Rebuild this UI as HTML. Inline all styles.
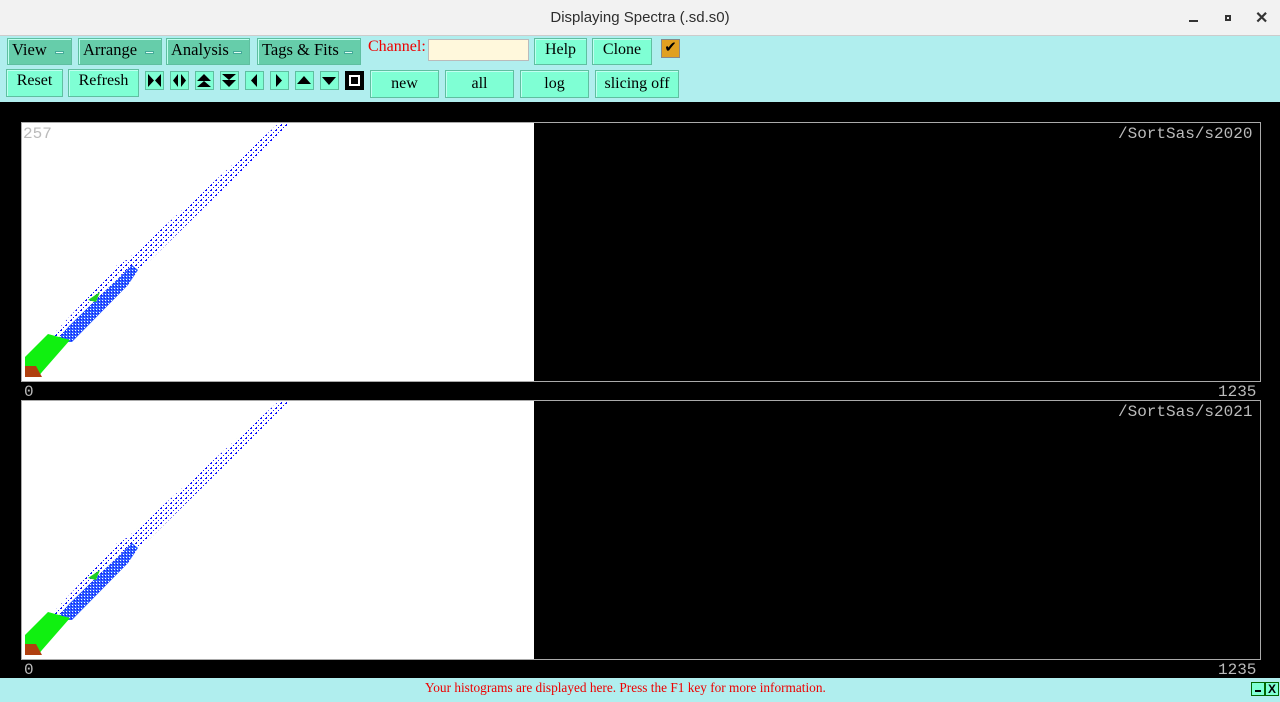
<!DOCTYPE html><html><head><style>
*{margin:0;padding:0;box-sizing:border-box}
body{width:1280px;height:702px;overflow:hidden;background:#000;position:relative;font-family:"Liberation Serif",serif}
.a{position:absolute}
.tb{left:0;top:0;width:1280px;height:36px;background:#f2f2f2;border-bottom:1px solid #ccc;text-align:center;font:15px/36px "Liberation Sans",sans-serif;color:#2e2e2e}
.bar{left:0;top:36px;width:1280px;height:66px;background:#b0eeee}
.b{position:absolute;background:#7fffd4;border:1px solid #5fbfa0;font-size:16px;text-align:center;color:#000;box-shadow:inset 1px 1px 0 #c0fff0}
.m{background:#66cdaa;text-align:left;padding-left:4px;font-size:16.5px}
.m i{position:absolute;right:7px;top:12px;width:9px;height:3px;background:#e0fff4;border:1px solid #4a9}
.lab{font:16px "Liberation Mono",monospace;color:#bbb}
</style></head><body>
<div class="a tb">Displaying Spectra (.sd.s0)</div>
<div class="a" style="left:1189px;top:20px;width:9px;height:2px;background:#333"></div>
<div class="a" style="left:1225px;top:15px;width:6px;height:6px;border:2px solid #333"></div>
<div class="a" style="left:1255px;top:8px;font:bold 16px 'Liberation Sans',sans-serif;color:#333">✕</div>
<div class="a bar"></div>
<div class="b m" style="left:7px;top:38px;width:65px;height:27px;line-height:22px">View<i></i></div>
<div class="b m" style="left:78px;top:38px;width:84px;height:27px;line-height:22px">Arrange<i></i></div>
<div class="b m" style="left:166px;top:38px;width:84px;height:27px;line-height:22px">Analysis<i></i></div>
<div class="b m" style="left:257px;top:38px;width:104px;height:27px;line-height:22px">Tags &amp; Fits<i></i></div>
<div class="a" style="left:368px;top:38px;font-size:16px;color:#e00">Channel:</div>
<div class="a" style="left:428px;top:39px;width:101px;height:22px;background:#fff8dc;border:1px solid #bbb"></div>
<div class="b" style="left:534px;top:38px;width:53px;height:27px;line-height:22px">Help</div>
<div class="b" style="left:592px;top:38px;width:60px;height:27px;line-height:22px">Clone</div>
<div class="a" style="left:661px;top:39px;width:19px;height:19px;background:#e0a020;border:1px solid #888;font-size:15px;line-height:17px;text-align:center">✔</div>
<div class="b" style="left:6px;top:69px;width:57px;height:28px;line-height:22px">Reset</div>
<div class="b" style="left:68px;top:69px;width:71px;height:28px;line-height:22px">Refresh</div>
<svg class="a" style="left:0;top:0" width="370" height="100">
<g fill="#7fffd4" stroke="#5fbfa0"><rect x="145.5" y="71.5" width="18" height="18"/><rect x="170.5" y="71.5" width="18" height="18"/><rect x="195.5" y="71.5" width="18" height="18"/><rect x="220.5" y="71.5" width="18" height="18"/><rect x="245.5" y="71.5" width="18" height="18"/><rect x="270.5" y="71.5" width="18" height="18"/><rect x="295.5" y="71.5" width="18" height="18"/><rect x="320.5" y="71.5" width="18" height="18"/></g>
<rect x="345" y="71" width="19" height="19" fill="#000"/><rect x="349" y="75" width="11" height="11" fill="#fff"/><rect x="351" y="77" width="7" height="7" fill="#000"/>
<g fill="#000">
<path d="M148 74v13l6-6.5zM161 74v13l-6-6.5z"/>
<path d="M178 74v13l-5-6.5zM181 74v13l5-6.5z"/>
<path d="M197 81h14l-7-7zM197 87h14l-7-6z"/>
<path d="M222 74h14l-7 6zM222 80h14l-7 7z"/>
<path d="M257 74v13l-6-6.5z"/>
<path d="M276 74v13l6-6.5z"/>
<path d="M297 84h14l-7-8z"/>
<path d="M322 77h14l-7 8z"/>
</g></svg>
<div class="b" style="left:370px;top:70px;width:69px;height:28px;line-height:26px">new</div>
<div class="b" style="left:445px;top:70px;width:69px;height:28px;line-height:26px">all</div>
<div class="b" style="left:520px;top:70px;width:69px;height:28px;line-height:26px">log</div>
<div class="b" style="left:595px;top:70px;width:84px;height:28px;line-height:26px">slicing off</div>

<div class="a" style="left:21px;top:122px;width:1240px;height:260px;border:1px solid #aaa"></div>
<div class="a" style="left:22px;top:123px;width:512px;height:258px;background:#fff"></div>
<div class="a" style="left:21px;top:400px;width:1240px;height:260px;border:1px solid #aaa"></div>
<div class="a" style="left:22px;top:401px;width:512px;height:258px;background:#fff"></div>
<svg class="a" style="left:0;top:0" width="600" height="702">
<defs>
<pattern id="d" width="5" height="5" patternUnits="userSpaceOnUse"><rect width="2" height="1" fill="#1010ff"/><rect x="3" y="2" width="1" height="1" fill="#1010ff"/><rect x="1" y="4" width="1" height="1" fill="#1010ff"/></pattern>
<pattern id="e" width="3" height="3" patternUnits="userSpaceOnUse"><rect width="3" height="3" fill="#3060ff"/><rect width="1" height="1" fill="#fff"/><rect x="2" y="1" width="1" height="1" fill="#1010ff"/></pattern>
</defs>
<g id="s">
<polygon points="118,268 279,123 292,123 140,270 125,282" fill="url(#d)"/>
<polygon points="120,262 135,258 60,340 50,338" fill="url(#d)"/>
<polygon points="132,265 70,325 55,342 72,342 128,285 138,270" fill="url(#e)"/>
<polygon points="88,300 100,292 96,302" fill="#20d020"/>
<polygon points="25,357 48,334 70,340 42,372 38,377 25,377" fill="#10f010"/>
<polygon points="25,366 36,366 42,377 25,377" fill="#b04010"/>
</g>
<use href="#s" transform="translate(0,278)"/>
</svg>
<div class="a lab" style="left:23px;top:125px">257</div>
<div class="a lab" style="left:24px;top:383px">0</div>
<div class="a lab" style="left:1218px;top:383px">1235</div>
<div class="a lab" style="left:1118px;top:125px">/SortSas/s2020</div>
<div class="a lab" style="left:24px;top:661px">0</div>
<div class="a lab" style="left:1218px;top:661px">1235</div>
<div class="a lab" style="left:1118px;top:403px">/SortSas/s2021</div>
<div class="a" style="left:0;top:678px;width:1280px;height:24px;background:#b0eeee;font-size:13.3px;line-height:20px;color:#e00"><span style="position:absolute;left:425px">Your histograms are displayed here. Press the F1 key for more information.</span></div>
<div class="a" style="left:1251px;top:682px;width:14px;height:14px;background:#7fffd4;border:1px solid #060"><div style="margin:7px 3px 0;height:2px;background:#000"></div></div>
<div class="a" style="left:1265px;top:682px;width:14px;height:14px;background:#7fffd4;border:1px solid #060;font:bold 12px/12px 'Liberation Sans',sans-serif;text-align:center">X</div>
</body></html>
